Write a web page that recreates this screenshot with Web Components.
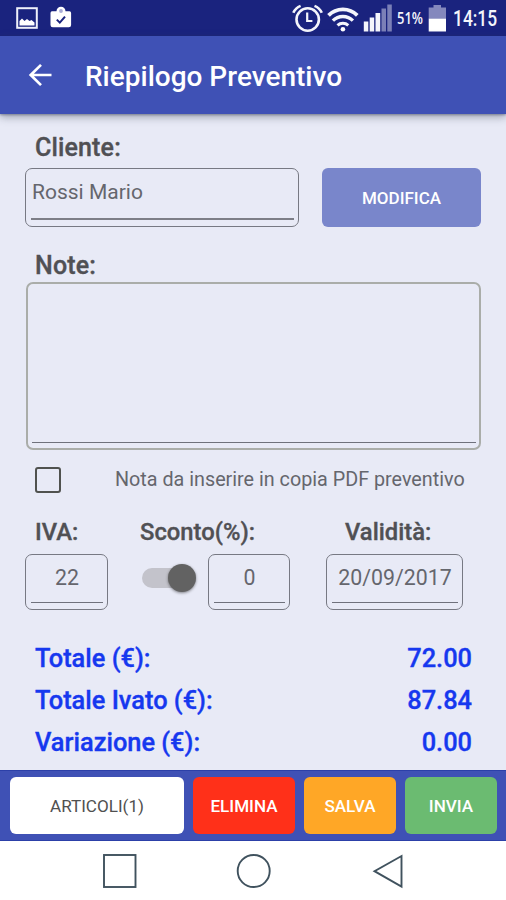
<!DOCTYPE html>
<html lang="it">
<head>
<meta charset="utf-8">
<title>Riepilogo Preventivo</title>
<style>
  body { margin: 0; background: #fff; font-family: Roboto, "Liberation Sans", sans-serif; }
</style>
</head>
<body>
<quote-screen></quote-screen>
<script>
const define = (name, html) => {
  const template = document.createElement('template');
  template.innerHTML = html;
  customElements.define(name, class extends HTMLElement {
    constructor() {
      super();
      this.attachShadow({ mode: 'open' }).append(template.content.cloneNode(true));
    }
  });
};

define('status-bar', `
<style>
  :host { display: flex; height: 36px; background: #1a237e; color: #f4f5fb; box-sizing: border-box; justify-content: space-between; }
  svg { display: block; flex: none; }
  .side { display: flex; align-items: center; }
  .left { padding-left: 16px; gap: 12px; }
  .right { padding-right: 9px; }
  .pct { font: 600 17px/36px "Open Sans", Roboto, sans-serif; width: 27px; margin-left: 4px; white-space: nowrap; }
  .pct span, .clock span { display: inline-block; transform-origin: 0 50%; }
  .pct span { transform: scaleX(.76); }
  .clock { font: 500 22px/36px Roboto, sans-serif; width: 44px; margin-left: 7px; white-space: nowrap; padding-top: 1px; }
  .clock span { transform: scaleX(.79); }
</style>
<div class="side left">
  <svg width="22" height="36" viewBox="16 0 22 36">
    <rect x="17.2" y="8.2" width="19.6" height="19.6" fill="none" stroke="#eef0fa" stroke-width="2"/>
    <path d="M19.500 25.500v-4.500l2.500-2.500 2.500 2.500 2.500-2 2.500 2 2-1 3 2.500v3z" fill="#fff"/>
  </svg>
  <svg width="22" height="36" viewBox="50 0 22 36">
    <path d="M52 11.300h4.500a4.500 4.500 0 0 1 9 0h4a1.600 1.600 0 0 1 1.600 1.600v12a2.300 2.300 0 0 1-2.300 2.300h-16a2.300 2.300 0 0 1-2.300-2.300v-12a1.600 1.600 0 0 1 1.500-1.600z" fill="#fff"/>
    <circle cx="61" cy="11" r="1.900" fill="#a8acd6"/>
    <path d="M56.800 19.600l3 3 5.200-6" fill="none" stroke="#1a237e" stroke-width="2"/>
  </svg>
</div>
<div class="side right">
  <svg width="102" height="36" viewBox="291.500 0 102 36">
    <g fill="none" stroke="#f4f5fb">
      <circle cx="308.200" cy="19.500" r="11.200" stroke-width="2.600"/>
      <path d="M307.700 12.500v8.500h5.200" stroke-width="2.200"/>
      <path d="M293.800 12.800q2.300-4.900 7.300-6.900M315 5.900q5 2 7.300 6.900" stroke-width="2.600"/>
      <path d="M329 15.400a20 20 0 0 1 28.800 0" stroke-width="3.700"/>
      <path d="M333.400 20.700a14 14 0 0 1 20 0" stroke-width="3.300"/>
      <path d="M338 25.300a8 8 0 0 1 10.800 0" stroke-width="3"/>
    </g>
    <circle cx="343.400" cy="29.200" r="2.300" fill="#fff"/>
    <path d="M364.300 21.500h4.500v10h-4.500zM370.200 17.500h4.500v14h-4.500zM376 13h4.700v18.500h-4.700z" fill="#f4f5fb"/>
    <path d="M382 8.500h4.500v23h-4.500zM387.800 4.500h4.500v27h-4.500z" fill="#7b80b7"/>
  </svg>
  <div class="pct"><span>51%</span></div>
  <svg width="18" height="36" viewBox="429 0 18 36" style="margin-left:4px">
    <path d="M434.500 5h7.500v2.500h5v11h-17.300v-11h4.800z" fill="#8488bd"/>
    <path d="M429.700 18.500h17.300v13h-17.300z" fill="#fff"/>
  </svg>
  <div class="clock"><span>14:15</span></div>
</div>`);

define('app-bar', `
<style>
  :host { display: flex; align-items: center; height: 78px; padding-left: 28px; box-sizing: border-box; background: #3f51b5; color: #fff; position: relative; z-index: 1;
    box-shadow: 0 3px 8px rgba(50,60,80,.42), 0 1px 2px rgba(50,60,80,.4); }
  svg { flex: none; display: block; }
  h1 { margin: 3px 0 0 32px; font-size: 28px; line-height: 32px; font-weight: 500; white-space: nowrap; }
</style>
<svg width="25" height="24" viewBox="0 0 25 24"><path d="M23.500 12H3M13 1.900L2.700 12 13 22.100" fill="none" stroke="#fff" stroke-width="2.700"/></svg>
<h1><slot></slot></h1>`);

define('field-label', `
<style>
  :host { display: block; height: 28px; line-height: 28px; font-size: 23.800px; font-weight: 500; color: #505054; white-space: nowrap; -webkit-text-stroke: .35px #505054; }
  :host([large]) { font-size: 25px; line-height: 30px; padding-left: 10px; letter-spacing: .15px; }
</style><slot></slot>`);

define('text-field', `
<style>
  :host { display: flex; flex-direction: column; box-sizing: border-box; height: 56px; border: 1.500px solid #777983; border-radius: 7px; padding: 0 4px 6px 5px; color: #65666d; font-size: 21.300px; text-align: center; }
  :host([wide]) { height: 59px; text-align: left; font-size: 21px; }
  :host([wide]) .value { text-indent: 1px; border-bottom: 2px solid #7d7e87; }
  :host([area]) { height: 168px; border: 2px solid #aaada9; padding: 0 3px 5px 4px; }
  .value { flex: 1; line-height: 26px; padding-top: 10px; border-bottom: 1.500px solid #6f717c; white-space: nowrap; }
</style><div class="value"><slot></slot></div>`);

define('action-button', `
<style>
  :host { display: flex; align-items: center; justify-content: center; box-sizing: border-box; border-radius: 6px; height: 57px; padding-top: 1px;
    background: var(--bg); color: var(--fg, #fff); font-size: var(--size, 17.100px); font-weight: var(--weight, 500); white-space: nowrap; }
</style><slot></slot>`);

define('check-box', `
<style>
  :host { display: block; box-sizing: border-box; width: 26px; height: 26px; border: 2.500px solid #50524f; border-radius: 3px; }
</style>`);

define('toggle-switch', `
<style>
  :host { display: grid; align-items: center; width: 54px; height: 56px; box-sizing: border-box; padding-bottom: 8px; }
  .track, .thumb { grid-area: 1 / 1; }
  .track { width: 44px; height: 20px; border-radius: 10px; background: #c3c3cb; }
  .thumb { justify-self: end; width: 28px; height: 28px; border-radius: 50%; background: #626262; box-shadow: 0 1px 3px rgba(0,0,0,.45); }
</style><div class="track"></div><div class="thumb"></div>`);

define('total-row', `
<style>
  :host { display: flex; justify-content: space-between; height: 42px; line-height: 42px; font-size: 25.400px; font-weight: 500; color: #1638ef; white-space: nowrap; -webkit-text-stroke: .35px #1638ef; }
</style><span><slot></slot></span><span><slot name="amount"></slot></span>`);

define('quote-form', `
<style>
  :host { display: block; height: 656px; box-sizing: border-box; padding: 19px 25px 0; background: #e8eaf6; }
  .row { display: flex; }
</style>
<field-label large>Cliente:</field-label>
<div class="row" style="margin-top:7px;justify-content:space-between">
  <text-field wide style="width:274px">Rossi Mario</text-field>
  <action-button style="width:159px;height:59px;--bg:#7986cb;--size:17px">MODIFICA</action-button>
</div>
<field-label large style="margin-top:24px">Note:</field-label>
<text-field area style="margin:3px 0 0 1px"></text-field>
<div class="row" style="margin:17px 0 0 10px;height:26px;align-items:center">
  <check-box></check-box>
  <span style="margin:-1px 0 0 54px;font-size:19.750px;line-height:24px;color:#65666d;white-space:nowrap">Nota da inserire in copia PDF preventivo</span>
</div>
<div class="row" style="margin-top:25px;padding-left:10px">
  <field-label style="width:105px">IVA:</field-label>
  <field-label style="width:205px">Sconto(%):</field-label>
  <field-label>Validità:</field-label>
</div>
<div class="row" style="margin-top:8px">
  <text-field style="width:83px">22</text-field>
  <toggle-switch style="margin-left:34px"></toggle-switch>
  <text-field style="width:82px;margin-left:12px">0</text-field>
  <text-field style="width:137px;margin-left:36px">20/09/2017</text-field>
</div>
<div style="margin-top:27px;padding:0 9px 0 10px">
  <total-row>Totale (€):<span slot="amount">72.00</span></total-row>
  <total-row>Totale Ivato (€):<span slot="amount">87.84</span></total-row>
  <total-row>Variazione (€):<span slot="amount">0.00</span></total-row>
</div>`);

define('action-bar', `
<style>
  :host { display: flex; box-sizing: border-box; height: 71px; padding: 6px 9px 0 10px; justify-content: space-between; background: #3f51b5; border-top: 1px solid #2c40a8; border-bottom: 1px solid #2c40a8; }
</style><slot></slot>`);

define('nav-bar', `
<style>:host { display: block; height: 59px; background: #fff; } svg { display: block; }</style>
<svg width="506" height="59" viewBox="0 841 506 59" fill="none" stroke="#40525e" stroke-width="1.900">
  <rect x="104" y="855" width="31.500" height="32"/>
  <circle cx="253.700" cy="871" r="16"/>
  <path d="M401.500 856v30.500l-27-15.300z"/>
</svg>`);

define('quote-screen', `
<style>:host { display: flex; flex-direction: column; width: 506px; height: 900px; overflow: hidden; }</style>
<status-bar></status-bar>
<app-bar>Riepilogo Preventivo</app-bar>
<quote-form></quote-form>
<action-bar>
  <action-button style="width:174px;--bg:#fff;--fg:#505050;--weight:400">ARTICOLI(1)</action-button>
  <action-button style="width:102px;--bg:#ff3019">ELIMINA</action-button>
  <action-button style="width:92px;--bg:#ffa726">SALVA</action-button>
  <action-button style="width:92px;--bg:#6bbb71">INVIA</action-button>
</action-bar>
<nav-bar></nav-bar>`);
</script>
</body>
</html>
